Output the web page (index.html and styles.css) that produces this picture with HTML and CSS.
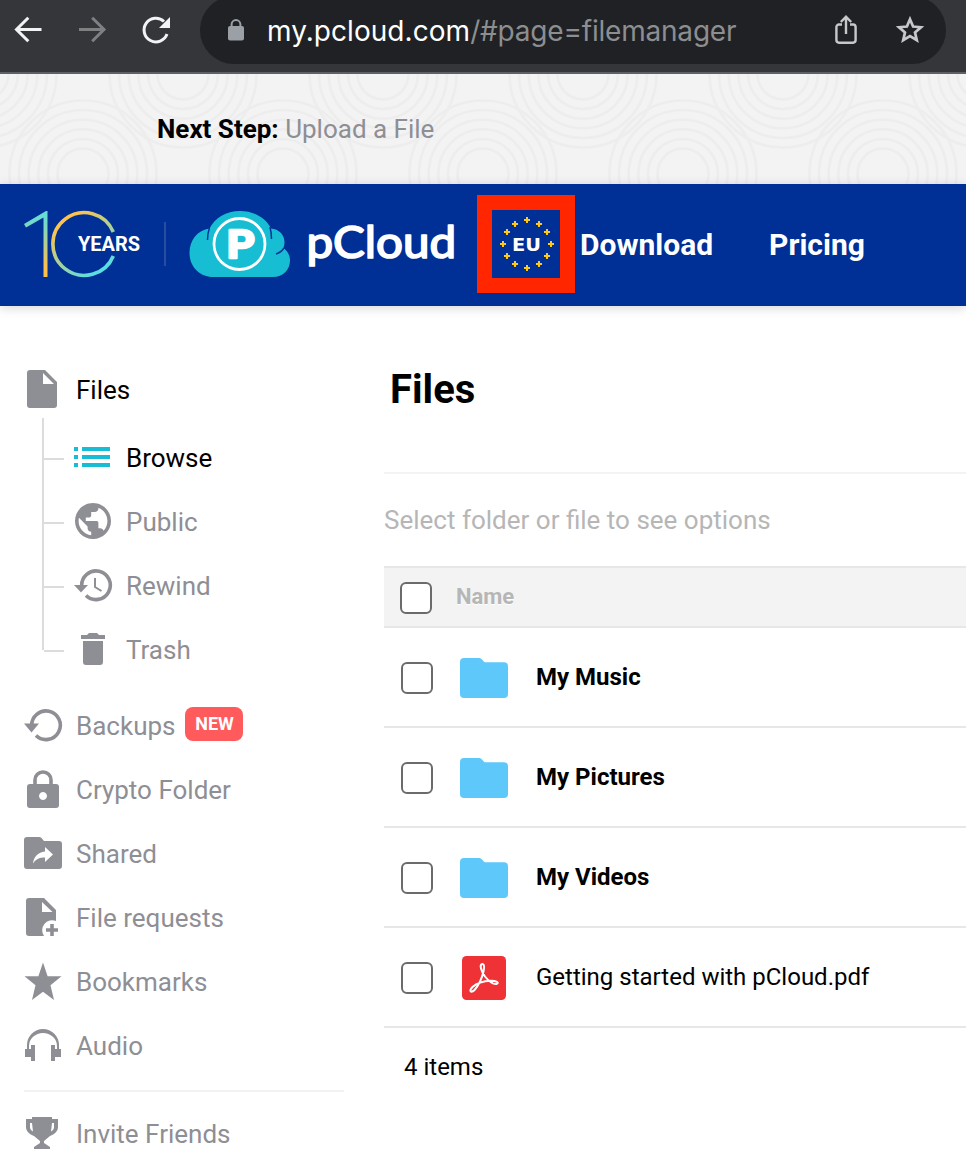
FILE: index.html
```html
<!DOCTYPE html>
<html lang="en">
<head>
<meta charset="utf-8">
<title>pCloud - Files</title>
<link rel="stylesheet" href="styles.css">
</head>
<body>
<div class="browser">
  <svg class="nav-icon" viewBox="0 0 40 40" fill="none" stroke="#f1f3f4" stroke-width="3"><path d="M33.500 19.500H9.500M20.300 7.800L8.500 19.500l11.800 11.800"/></svg>
  <svg class="nav-icon" viewBox="0 0 40 40" fill="none" stroke="#7f8082" stroke-width="3"><path d="M7 19.500h24M20.200 7.800L32 19.500 20.200 31.300"/></svg>
  <svg class="nav-icon" viewBox="0 0 40 40" fill="none"><path d="M28 11.500A11.800 11.800 0 1 0 31 24" stroke="#f1f3f4" stroke-width="3"/><path d="M34 7v11H23z" fill="#f1f3f4"/></svg>
  <div class="address">
    <svg class="lock" viewBox="0 0 16 22"><rect y="7" width="16" height="14.500" rx="2" fill="#9aa0a6"/><path d="M3.600 8V5.500a4.400 4.400 0 0 1 8.800 0V8" fill="none" stroke="#9aa0a6" stroke-width="2"/></svg>
    <span class="url"><b>my.pcloud.com</b>/#page=filemanager</span>
    <svg class="share" viewBox="0 0 24 32" fill="none" stroke="#c7c8ca" stroke-width="2.400"><path d="M8 10.500H5a2.600 2.600 0 0 0-2.600 2.600v13a2.600 2.600 0 0 0 2.600 2.600h14a2.600 2.600 0 0 0 2.600-2.600v-13a2.600 2.600 0 0 0-2.600-2.600h-3M12 20V3M6.800 8L12 2.800 17.200 8"/></svg>
    <svg class="star" viewBox="0 0 32 32" fill="none" stroke="#c7c8ca" stroke-width="2.700"><path d="M16 5.200l3.100 7.300 7.900.7-6 5.200 1.800 7.700-6.800-4.100-6.800 4.100 1.800-7.700-6-5.200 7.900-.7z"/></svg>
  </div>
</div>

<div class="banner">
  <svg class="banner-art" viewBox="0 0 966 110">
    <defs>
      <g id="rings" fill="none" stroke="#ededed" stroke-width="2.600"><circle r="25.500"/><circle r="35"/><circle r="44.700"/><circle r="54.300"/><circle r="64"/><circle r="73.500"/></g>
    </defs>
    <use href="#rings" x="-17"/><use href="#rings" x="183"/><use href="#rings" x="383"/><use href="#rings" x="583"/><use href="#rings" x="783"/><use href="#rings" x="983"/>
    <use href="#rings" x="83" y="100"/><use href="#rings" x="283" y="100"/><use href="#rings" x="483" y="100"/><use href="#rings" x="683" y="100"/><use href="#rings" x="883" y="100"/>
  </svg>
  <p class="step"><b>Next Step:</b> <span>Upload a File</span></p>
</div>

<header class="header">
  <svg class="logo" viewBox="0 184 477 122">
    <defs>
      <linearGradient id="one" x1="0" y1="0" x2="0" y2="1"><stop offset="0" stop-color="#62dfdc"/><stop offset=".2" stop-color="#76d8c6"/><stop offset=".85" stop-color="#fdc04c"/></linearGradient>
      <linearGradient id="zero" gradientUnits="userSpaceOnUse" x1="62" y1="222" x2="98" y2="274"><stop offset="0" stop-color="#ffc34c"/><stop offset="1" stop-color="#55dfe6"/></linearGradient>
    </defs>
    <path d="M47.500 211v66h-4v-59.500L26 227.500l-2-3.500 22-13z" fill="url(#one)"/>
    <path d="M113.300 232a31.400 31.400 0 1 0 0 24" fill="none" stroke="url(#zero)" stroke-width="3.600"/>
    <text class="years" x="78" y="251" textLength="62" lengthAdjust="spacingAndGlyphs">YEARS</text>
    <path d="M165 222v44" stroke="#274da1" stroke-width="2"/>
    <path d="M213 277c-13 0-23.500-10-23.500-24 0-13 8-23 20-24.500C215 218 226 211 240 211s26 7 31 17.500c8 .5 13.500 6.500 13.500 13.500 0 2.500-.5 4-1 6 4 3 6.500 7 6.500 12.500 0 9-7 16.500-17 16.500z" fill="#17bed3"/>
    <path d="M209.500 228q-2 5-2 12M270 227q1.500 6 1.500 12M284 248q-3 4.500-8 6" fill="none" stroke="#063397" stroke-width="1.500"/>
    <circle cx="239.500" cy="244" r="25.500" fill="none" stroke="#fff" stroke-width="2.800"/>
    <text class="mark" x="227" y="257.500" textLength="28" lengthAdjust="spacingAndGlyphs">P</text>
    <text class="wordmark" x="306.500" y="258" textLength="149.500" lengthAdjust="spacingAndGlyphs">pCloud</text>
  </svg>
  <div class="region">
    <svg viewBox="0 0 68 68">
      <g fill="none" stroke="#ffc91b" stroke-width="2"><path id="s" d="M35 7v6M32 10h6"/><use href="#s" x="12" y="4"/><use href="#s" x="20" y="12"/><use href="#s" x="24" y="24"/><use href="#s" x="20" y="36"/><use href="#s" x="12" y="44"/><use href="#s" y="48"/><use href="#s" x="-12" y="44"/><use href="#s" x="-20" y="36"/><use href="#s" x="-24" y="24"/><use href="#s" x="-20" y="12"/><use href="#s" x="-12" y="4"/></g>
      <text class="eu" x="20" y="41" textLength="29" lengthAdjust="spacingAndGlyphs">EU</text>
    </svg>
  </div>
  <nav class="links"><a class="download">Download</a><a class="pricing">Pricing</a></nav>
</header>

<div class="page">
  <aside class="side">
    <div class="item active"><svg viewBox="0 0 40 40"><path fill-rule="evenodd" d="M7 0h15l12 12v23a3 3 0 0 1-3 3H7a3 3 0 0 1-3-3V3a3 3 0 0 1 3-3zM20 3v11h11z"/></svg><span>Files</span></div>
    <div class="tree">
      <div class="item active"><svg class="teal" viewBox="0 0 40 40"><path d="M1 9h4v4H1zM9 9h28v4H9zM1 17h4v4H1zM9 17h28v4H9zM1 25h4v4H1zM9 25h28v4H9z"/></svg><span>Browse</span></div>
      <div class="item"><svg viewBox="0 0 40 40"><path transform="translate(-1.600 -2.600) scale(1.800)" d="M12 2C6.480 2 2 6.480 2 12s4.480 10 10 10 10-4.480 10-10S17.520 2 12 2zm-1 17.930c-3.950-.49-7-3.850-7-7.930 0-.62.08-1.210.21-1.790L9 15v1c0 1.100.9 2 2 2v1.930zm6.900-2.540c-.26-.81-1-1.390-1.900-1.390h-1v-3c0-.55-.45-1-1-1H8v-2h2c.55 0 1-.45 1-1V7h2c1.100 0 2-.9 2-2v-.41c2.930 1.190 5 4.060 5 7.410 0 2.080-.8 3.970-2.100 5.390z"/></svg><span>Public</span></div>
      <div class="item"><svg viewBox="0 0 40 40"><path class="line" d="M8.700 20a14.300 14.300 0 1 1 4.300 9.500"/><path d="M1 19h14l-7 7.500z"/><path d="M22 12v9l6.500 4" fill="none" stroke="#8e8e95" stroke-width="2"/></svg><span>Rewind</span></div>
      <div class="item"><svg viewBox="0 0 40 40"><path d="M8 5h6l2-2h8l2 2h6v4H8zM10 11h20v21a3 3 0 0 1-3 3H13a3 3 0 0 1-3-3z"/></svg><span>Trash</span></div>
    </div>
    <div class="item"><svg viewBox="0 0 40 40"><path class="line" d="M8.700 20a14.300 14.300 0 1 1 4.300 9.500"/><path d="M1 17.500h15l-7.500 9z"/></svg><span>Backups</span><em class="badge">NEW</em></div>
    <div class="item"><svg viewBox="0 0 40 40"><path fill-rule="evenodd" d="M7 14h26a3 3 0 0 1 3 3v18a3 3 0 0 1-3 3H7a3 3 0 0 1-3-3V17a3 3 0 0 1 3-3zM20 22a4 4 0 1 0 .01 0z"/><path class="line" d="M12 15v-5a8 8 0 0 1 16 0v5"/></svg><span>Crypto Folder</span></div>
    <div class="item"><svg viewBox="0 0 40 40"><path fill-rule="evenodd" d="M4 3h12q1.500 0 2.500 1L21 7h15a3 3 0 0 1 3 3v22a3 3 0 0 1-3 3H4a3 3 0 0 1-3-3V6a3 3 0 0 1 3-3zM22 13v4.500C14 18.500 10.500 24 10 29.500c3-5 7-6 12-6V28l8-7.500z"/></svg><span>Shared</span></div>
    <div class="item"><svg viewBox="0 0 40 40"><path fill-rule="evenodd" d="M6 0h15l12 12v11A10 10 0 0 0 21 38H6a3 3 0 0 1-3-3V3a3 3 0 0 1 3-3zM19 4v10h10.500z"/><path class="line" d="M23 32h12M29 26v12"/></svg><span>File requests</span></div>
    <div class="item"><svg viewBox="0 0 40 40"><path d="M20 .5L24.600 14.300H38.500L27.500 23.200 31 38 20 29.800 9 38 12.500 23.200 1.500 14.300H15.400Z"/></svg><span>Bookmarks</span></div>
    <div class="item"><svg viewBox="0 0 40 40"><path d="M4 23v-4a16 16 0 0 1 32 0v4h-2v-3a14 13 0 0 0-28 0v3zM2 23h6v-4h4v16H8v-4H2zM38 23h-6v-4h-4v16h4v-4h6z"/></svg><span>Audio</span></div>
    <hr class="rule">
    <div class="item"><svg viewBox="0 0 40 40"><path fill-rule="evenodd" d="M9 3h20v2h6v8c0 4.500-3.500 7-8 9L21 27v2l6 4v2H11v-2l6-4v-2l-6-5c-4.500-2-8-4.500-8-9V5h6zM7 9v5q.5 2 3 3.500L9 9zM31 9h-2l-1 8.500q2.500-1.500 3-3.500z"/></svg><span>Invite Friends</span></div>
  </aside>

  <main class="main">
    <h1 class="title">Files</h1>
    <p class="hint">Select folder or file to see options</p>
    <div class="thead"><i class="check"></i><b>Name</b></div>
    <div class="row"><i class="check"></i><svg viewBox="0 0 48 48"><path d="M4 4h15q1.500 0 2.500 1l3 3.300H44a4 4 0 0 1 4 4V40a4 4 0 0 1-4 4H4a4 4 0 0 1-4-4V8a4 4 0 0 1 4-4z" fill="#5fc8fa"/></svg><b>My Music</b></div>
    <div class="row"><i class="check"></i><svg viewBox="0 0 48 48"><path d="M4 4h15q1.500 0 2.500 1l3 3.300H44a4 4 0 0 1 4 4V40a4 4 0 0 1-4 4H4a4 4 0 0 1-4-4V8a4 4 0 0 1 4-4z" fill="#5fc8fa"/></svg><b>My Pictures</b></div>
    <div class="row"><i class="check"></i><svg viewBox="0 0 48 48"><path d="M4 4h15q1.500 0 2.500 1l3 3.300H44a4 4 0 0 1 4 4V40a4 4 0 0 1-4 4H4a4 4 0 0 1-4-4V8a4 4 0 0 1 4-4z" fill="#5fc8fa"/></svg><b>My Videos</b></div>
    <div class="row"><i class="check"></i><svg viewBox="0 0 48 48"><rect x="2" y="2" width="44" height="44" rx="4.500" fill="#ef3236"/><path d="M22.500 10c-3.500 0-1.500 7 2.500 12.500 4 5 8 8 11.500 7.500 3.500-1-.5-3.500-6-3.300-7 .3-14 2.800-18 6.300-4 4-1.500 6.500 2 3C18 32 22 24 23.500 17.500c1.200-5 .5-7.500-1-7.500z" fill="none" stroke="#fff" stroke-width="2"/></svg><span>Getting started with pCloud.pdf</span></div>
    <p class="count">4 items</p>
  </main>
</div>
</body>
</html>
```
FILE: styles.css
```css
* { box-sizing: border-box; }
body { margin: 0; width: 966px; height: 1172px; overflow: hidden; background: #fff; color: #000; font-family: Roboto, "Liberation Sans", sans-serif; font-size: 26px; line-height: 32px; white-space: nowrap; }
p, h1 { margin: 0; }
svg { display: block; flex: none; }

.browser { display: flex; align-items: flex-start; height: 74px; padding-left: 8px; gap: 24px; background: #35363a; border-bottom: 2px solid #5f6064; overflow: hidden; }
.nav-icon { width: 40px; height: 40px; margin-top: 10px; }
.address { display: flex; align-items: center; width: 746px; height: 68px; margin-top: -4px; border-radius: 34px; background: #202124; padding: 0 20px 0 28px; }
.lock { width: 16px; height: 22px; }
.url { margin-left: 23px; width: 567px; padding-top: 1px; font-family: Inter, "Liberation Sans", sans-serif; font-size: 28px; letter-spacing: -.2px; color: #8d8e90; }
.url b { font-weight: 400; letter-spacing: .05px; color: #fff; }
.share { width: 24px; height: 32px; }
.star { width: 32px; height: 32px; margin-left: 36px; }

.banner { position: relative; height: 110px; background: #f3f3f3; padding: 39px 0 0 157px; }
.banner-art { position: absolute; left: 0; top: 0; width: 966px; height: 110px; }
.step { position: relative; color: #8e8e95; }
.step b { color: #000; }

.header { position: relative; display: flex; height: 122px; background: #002f95; box-shadow: 0 2px 10px rgba(0, 0, 0, .16); color: #fff; }
.logo { width: 477px; height: 122px; }
.years { font: 700 21px Roboto, sans-serif; fill: #fff; }
.mark { font: 700 38px Roboto, sans-serif; fill: #fff; stroke: #fff; stroke-width: 2.4px; stroke-linejoin: round; }
.wordmark { font: 400 44px Lato, sans-serif; fill: #fff; stroke: #fff; stroke-width: 1.7px; stroke-linejoin: round; }
.region { width: 98px; height: 98px; margin-top: 11px; border: 15px solid #ff2600; }
.region svg { width: 68px; height: 68px; }
.eu { font: 700 18px "DejaVu Sans", sans-serif; fill: #fff; }
.links { display: flex; align-items: center; padding-left: 5px; font-size: 30px; font-weight: 700; }
.pricing { margin-left: 56px; }

.page { display: flex; }
.side { width: 384px; padding: 52px 40px 0 23px; color: #8e8e95; }
.item { display: flex; align-items: center; height: 64px; }
.item svg { width: 40px; height: 40px; margin-right: 13px; fill: #8e8e95; }
.item svg.teal { fill: #17bed3; }
.item .line { fill: none; stroke: #8e8e95; stroke-width: 3.6px; }
.active { color: #000; }
.tree { position: relative; margin: 4px 0 12px 19px; padding-left: 31px; }
.tree::before { content: ""; position: absolute; left: 0; top: -8px; width: 2px; height: 232px; background: #dcdcdc; }
.tree .item { position: relative; }
.tree .item::before { content: ""; position: absolute; left: -29px; top: 32px; width: 20px; height: 2px; background: #dcdcdc; }
.badge { width: 58px; height: 34px; margin: -4px 0 0 10px; border-radius: 8px; background: #ff5a5c; color: #fff; font: 700 18px/34px Roboto, sans-serif; text-align: center; }
.rule { height: 2px; margin: 12px 0 10px 1px; border: 0; background: #f2f2f2; }

.main { width: 582px; }
.title { height: 168px; padding: 60px 0 0 6px; border-bottom: 2px solid #f3f3f3; font-size: 40px; line-height: 48px; }
.hint { height: 92px; padding-top: 30px; color: #b6b6b6; }
.thead { display: flex; align-items: center; height: 62px; padding-left: 16px; background: #f3f3f3; border: solid #e7e7e7; border-width: 2px 0; color: #b6b6b6; font-size: 22px; text-shadow: 0 1px 0 #fff; }
.check { flex: none; width: 32px; height: 32px; border: 2px solid #6b6b6b; border-radius: 6px; background: #fff; margin-top: 2px; }
.thead b { margin: -1px 0 0 24px; }
.row { display: flex; align-items: center; height: 100px; padding-left: 17px; border-bottom: 2px solid #e7e7e7; font-size: 24px; }
.row svg { width: 48px; height: 48px; margin: 2px 28px 0 27px; }
.count { padding: 23px 0 0 20px; font-size: 24px; }
```
